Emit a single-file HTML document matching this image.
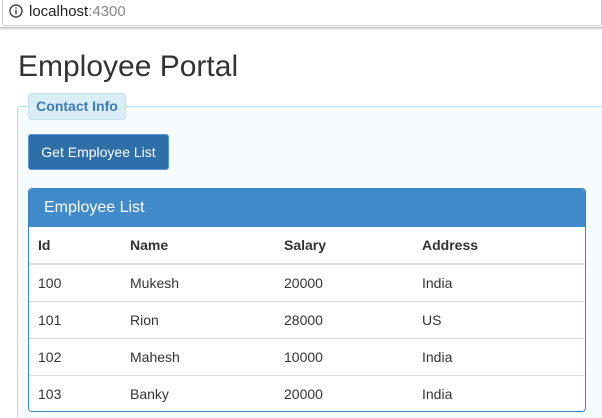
<!DOCTYPE html>
<html><head><style>
html,body{margin:0;width:602px;height:418px;overflow:hidden}
body{background:#fff;font-family:"Liberation Sans",Arial,sans-serif;position:relative}
.a{position:absolute}
td{padding:0}
</style></head><body>
<div class="a" style="left:0;top:0;width:602px;height:27px;background:#fff;border-bottom:1px solid #bbb"></div>
<div class="a" style="left:0;top:28px;width:602px;height:2px;background:#e4e4e4"></div>
<div class="a" style="left:2px;top:0;width:598px;height:25px;border:1px solid #ccc;border-top:none;border-radius:0 0 3px 3px;background:#fff"></div>
<svg class="a" style="left:9px;top:4px" width="14" height="14" viewBox="0 0 14 14"><circle cx="7" cy="7" r="6" fill="none" stroke="#444" stroke-width="1.4"/><rect x="6.3" y="6" width="1.4" height="4.5" fill="#444"/><rect x="6.3" y="3.3" width="1.4" height="1.5" fill="#444"/></svg>
<div class="a" style="left:29px;top:3px;font-size:15px;color:#222">localhost<span style="color:#888">:4300</span></div>
<div class="a" style="left:18px;top:50px;font-size:30px;color:#333">Employee Portal</div>
<div class="a" style="left:17px;top:106px;width:584px;height:311px;border:1px solid #a6e3ee;border-right:none;border-bottom:none;border-radius:4px 0 0 0;background:#f6fcfd"></div>
<div class="a" style="left:28px;top:93px;width:96px;height:25px;background:#d9edf7;border:1px solid #c8e3ee;border-radius:3px;font-size:14px;font-weight:bold;color:#3d7ab8;line-height:25px;text-align:center">Contact Info</div>
<div class="a" style="left:28px;top:134px;width:139px;height:34px;background:#2e6ea9;border:1px solid #5a96d6;border-radius:3px;color:#fff;font-size:14px;line-height:34px;text-align:center">Get Employee List</div>
<div class="a" style="left:28px;top:188px;width:556px;height:222px;border:1px solid #3d86c6;border-radius:4px;background:#fff;overflow:hidden">
<div style="height:38px;background:#428bca;color:#fff;font-size:16px;line-height:38px;padding-left:15px">Employee List</div>
<table style="border-collapse:collapse;table-layout:fixed;width:556px;font-size:14px;color:#333">
<colgroup><col style="width:101px"><col style="width:154px"><col style="width:138px"><col></colgroup>
<tr style="height:37px;font-weight:bold;border-bottom:2px solid #ddd"><td style="padding-left:9px">Id</td><td>Name</td><td>Salary</td><td>Address</td></tr>
<tr style="height:37px;border-bottom:1px solid #ddd"><td style="padding-left:9px">100</td><td>Mukesh</td><td>20000</td><td>India</td></tr>
<tr style="height:37px;border-bottom:1px solid #ddd"><td style="padding-left:9px">101</td><td>Rion</td><td>28000</td><td>US</td></tr>
<tr style="height:37px;border-bottom:1px solid #ddd"><td style="padding-left:9px">102</td><td>Mahesh</td><td>10000</td><td>India</td></tr>
<tr style="height:37px"><td style="padding-left:9px">103</td><td>Banky</td><td>20000</td><td>India</td></tr>
</table></div>
</body></html>
